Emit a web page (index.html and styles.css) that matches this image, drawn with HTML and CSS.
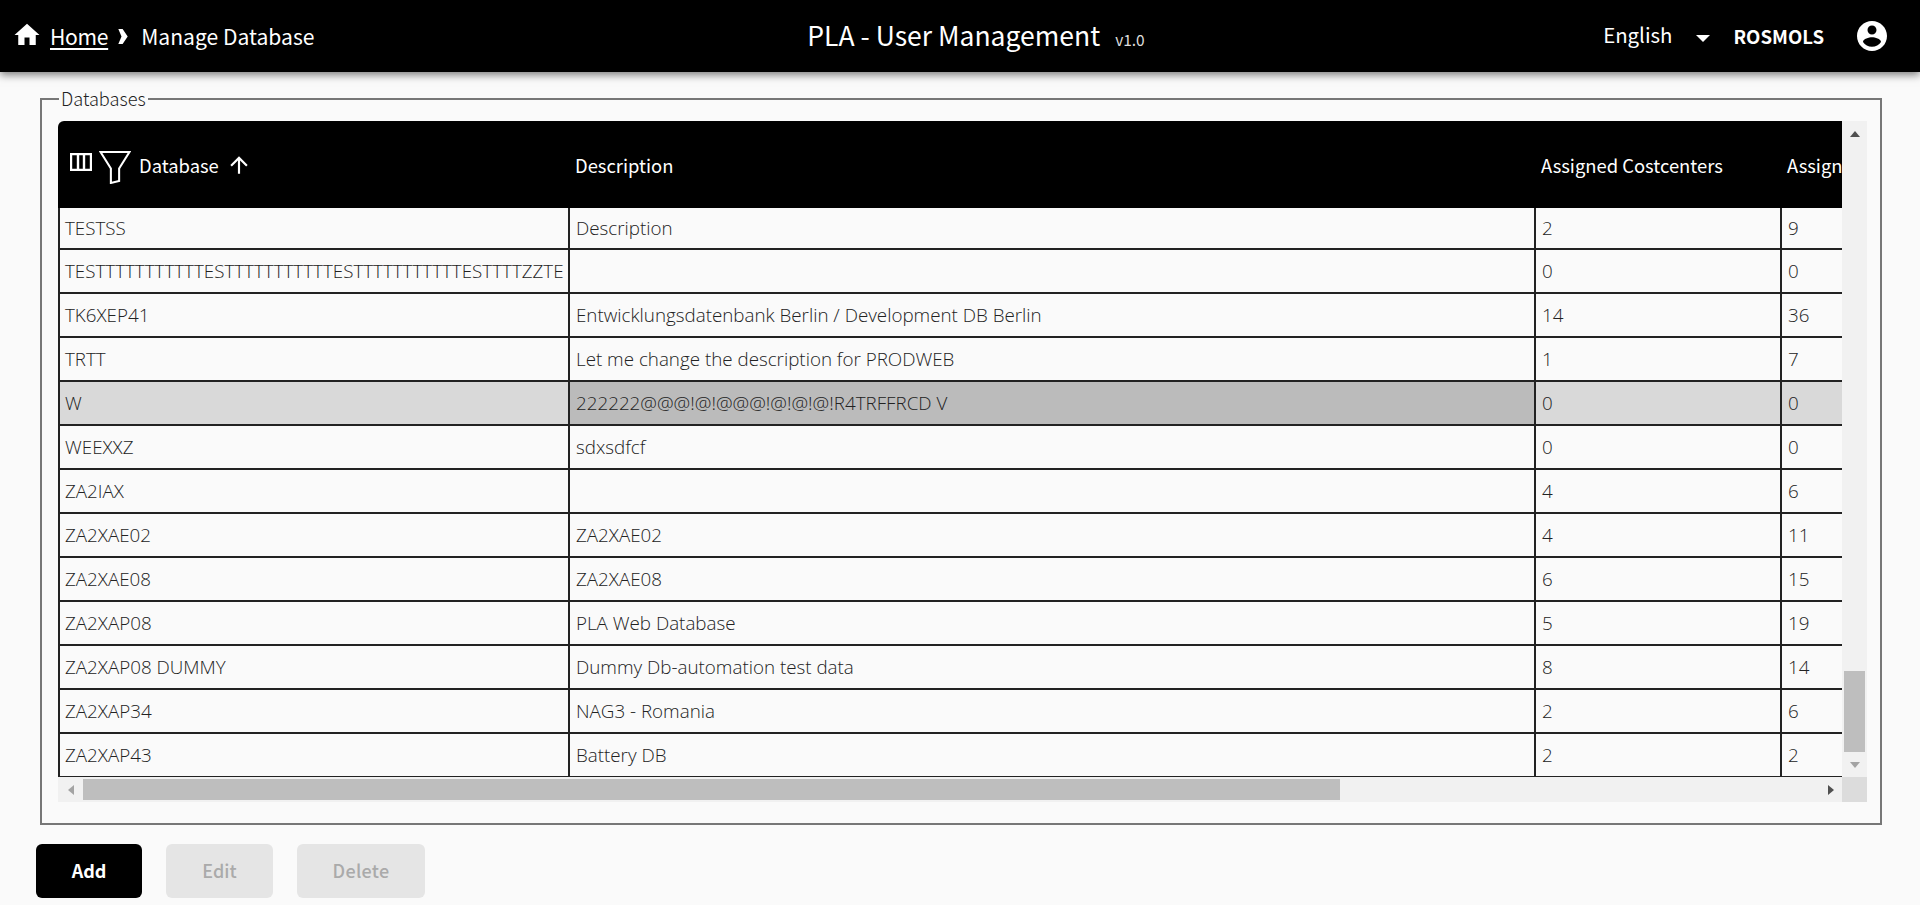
FILE: index.html
```html
<!DOCTYPE html>
<html lang="en">
<head>
<meta charset="utf-8">
<title>PLA - User Management</title>
<link rel="stylesheet" href="styles.css">
</head>
<body>
<header class="topbar">
  <nav class="crumbs">
    <svg class="home-icon" viewBox="0 0 24 24"><path d="M10 20v-6h4v6h5v-8h3L12 3 2 12h3v8z"/></svg>
    <a class="crumb-link" href="#">Home</a>
    <svg class="crumb-sep" viewBox="0 0 10 16"><path d="M0 0h4.6L10 8l-5.4 8H0l3.4-8z"/></svg>
    <span class="crumb-current">Manage Database</span>
  </nav>
  <div class="app-title"><span class="app-name">PLA - User Management</span><span class="app-version">v1.0</span></div>
  <div class="user-area">
    <span class="lang">English</span>
    <svg class="caret" viewBox="0 0 14 7"><path d="M0 0h14L7 7z"/></svg>
    <span class="user-name">ROSMOLS</span>
    <svg class="user-icon" viewBox="0 0 24 24"><path d="M12 2C6.48 2 2 6.48 2 12s4.48 10 10 10 10-4.48 10-10S17.52 2 12 2zm0 3c1.66 0 3 1.34 3 3s-1.34 3-3 3-3-1.34-3-3 1.34-3 3-3zm0 14.2c-2.5 0-4.71-1.28-6-3.22.03-1.99 4-3.08 6-3.08 1.99 0 5.97 1.09 6 3.08-1.29 1.94-3.5 3.22-6 3.22z"/></svg>
  </div>
</header>
<main class="page">
  <fieldset class="panel">
    <legend class="panel-title">Databases</legend>
    <div class="grid-shell">
      <div class="table-view">
        <table class="db-table">
          <colgroup><col class="c1"><col class="c2"><col class="c3"><col class="c4"></colgroup>
          <thead>
            <tr>
              <th>
                <div class="first-head">
                  <svg class="col-icon" viewBox="0 0 22 18"><path d="M1 1h20v16H1zM8 1v16M14 1v16"/></svg>
                  <svg class="filter-icon" viewBox="0 0 30 32"><path d="M1 1h28L19 17v12l-8 2V17z"/></svg>
                  <span class="db-label">Database</span>
                  <svg class="sort-icon" viewBox="0 0 24 24"><path d="M4 12l1.41 1.41L11 7.83V20h2V7.83l5.58 5.59L20 12l-8-8-8 8z"/></svg>
                </div>
              </th>
              <th>Description</th>
              <th>Assigned Costcenters</th>
              <th>Assigned Users</th>
            </tr>
          </thead>
          <tbody>
            <tr class="row-first"><td>TESTSS</td><td>Description</td><td>2</td><td>9</td></tr>
            <tr><td>TESTTTTTTTTTTTESTTTTTTTTTTTESTTTTTTTTTTTESTTTTZZTE</td><td></td><td>0</td><td>0</td></tr>
            <tr><td>TK6XEP41</td><td>Entwicklungsdatenbank Berlin / Development DB Berlin</td><td>14</td><td>36</td></tr>
            <tr><td>TRTT</td><td>Let me change the description for PRODWEB</td><td>1</td><td>7</td></tr>
            <tr class="row-selected"><td>W</td><td class="cell-focus">222222@@@!@!@@@!@!@!@!R4TRFFRCD V</td><td>0</td><td>0</td></tr>
            <tr><td>WEEXXZ</td><td>sdxsdfcf</td><td>0</td><td>0</td></tr>
            <tr><td>ZA2IAX</td><td></td><td>4</td><td>6</td></tr>
            <tr><td>ZA2XAE02</td><td>ZA2XAE02</td><td>4</td><td>11</td></tr>
            <tr><td>ZA2XAE08</td><td>ZA2XAE08</td><td>6</td><td>15</td></tr>
            <tr><td>ZA2XAP08</td><td>PLA Web Database</td><td>5</td><td>19</td></tr>
            <tr><td>ZA2XAP08 DUMMY</td><td>Dummy Db-automation test data</td><td>8</td><td>14</td></tr>
            <tr><td>ZA2XAP34</td><td>NAG3 - Romania</td><td>2</td><td>6</td></tr>
            <tr class="row-last"><td>ZA2XAP43</td><td>Battery DB</td><td>2</td><td>2</td></tr>
          </tbody>
        </table>
      </div>
      <div class="vbar">
        <span class="arrow arrow-up"></span>
        <span class="vthumb"></span>
        <span class="arrow arrow-down"></span>
      </div>
      <div class="hbar">
        <span class="arrow arrow-left"></span>
        <span class="hthumb"></span>
        <span class="arrow arrow-right"></span>
      </div>
      <div class="corner"></div>
    </div>
  </fieldset>
  <div class="actions">
    <button class="btn btn-add" type="button">Add</button>
    <button class="btn btn-edit" type="button" disabled>Edit</button>
    <button class="btn btn-delete" type="button" disabled>Delete</button>
  </div>
</main>
</body>
</html>
```

FILE: styles.css
```css
* { box-sizing: border-box; }
html, body { margin: 0; height: 905px; overflow: hidden; }
body { background: #fafafa; font-family: "Noto Sans CJK JP", Roboto, sans-serif; color: #333; }

.topbar {
  height: 72px;
  background: #000;
  color: #fff;
  display: grid;
  grid-template-columns: 1fr auto 1fr;
  align-items: center;
  box-shadow: 0 3px 8px rgba(0,0,0,.5);
  position: relative;
}
.crumbs { display: flex; align-items: center; padding-left: 12px; font-size: 21.1px; font-weight: 400; }
.home-icon { width: 30px; height: 30px; fill: #fff; margin-right: 8px; margin-top: -2px; }
.crumb-link { color: #fff; text-decoration: underline; text-decoration-thickness: 2px; text-underline-offset: 3px; margin-right: -1px; letter-spacing: -.3px; }
.crumb-sep { width: 10px; height: 15px; fill: #fff; margin: 0 13px 0 11px; }
.app-title { display: flex; align-items: baseline; margin: -4px 0 0 32px; }
.app-name { font-size: 26.5px; }
.app-version { font-size: 15.5px; margin-left: 15px; color: #ddd; }
.user-area { display: flex; align-items: center; justify-content: flex-end; padding-right: 30px; }
.lang { font-size: 20.4px; font-weight: 400; margin-top: -5px; }
.caret { width: 14px; height: 7px; fill: #fff; margin: 4px 23px 0 24px; }
.user-name { font-size: 18.6px; font-weight: 700; margin-top: -1px; }
.user-icon { width: 36px; height: 36px; fill: #fff; margin-left: 30px; }

.page { padding: 17px 38px 0 40px; }
.panel {
  margin: 0;
  min-width: 0;
  border: 2px solid #777;
  padding: 12px 13px 21px 16px;
  height: 736px;
}
.panel-title { font-size: 18.2px; line-height: 18px; font-weight: 300; padding: 0 2px 2px; margin-left: 1px; color: #222; }

.grid-shell {
  display: grid;
  grid-template-columns: 1784px 25px;
  grid-template-rows: 656px 25px;
}
.table-view { overflow: hidden; border-top-left-radius: 6px; }
.db-table { border-collapse: separate; border-spacing: 0; table-layout: fixed; width: 2023px; font-size: 18px; }
.c1 { width: 512px; }
.c2 { width: 966px; }
.c3 { width: 246px; }
.c4 { width: 299px; }
.db-table th {
  height: 87px;
  background: #000;
  color: #fff;
  text-align: left;
  font-weight: 400;
  padding: 0 5px;
  font-size: 18.4px;
  white-space: nowrap;
}
.db-table th:first-child { padding: 0 0 0 12px; }
.first-head { display: flex; align-items: center; }
.col-icon { width: 22px; height: 18px; fill: none; stroke: #fff; stroke-width: 2.4; margin-top: -5px; }
.filter-icon { width: 32px; height: 33px; fill: none; stroke: #fff; stroke-width: 2; margin: 6px 8px 0 7px; }
.sort-icon { width: 26px; height: 26px; fill: #fff; margin-left: 7px; }
.db-label { display: block; }
.db-table td {
  height: 44px;
  padding: 0 6px;
  font-family: "Open Sans", "Noto Sans", sans-serif;
  font-size: 18.8px;
  line-height: 22px;
  font-weight: 300;
  color: #222;
  white-space: nowrap;
  overflow: hidden;
  border-right: 2px solid #222;
  border-bottom: 2px solid #222;
}
.db-table td:first-child { border-left: 2px solid #222; padding-left: 5px; }
.db-table td:last-child { border-right: 0; }
.row-first td { height: 42px; }
.row-last td { height: 43px; border-bottom-width: 1px; }
.row-selected td { background: #d9d9d9; }
.row-selected td.cell-focus { background: #bbb; }

.vbar { background: #f1f1f1; display: flex; flex-direction: column; align-items: center; justify-content: space-between; padding: 10px 2px 9px; }
.vthumb { display: block; width: 21px; height: 81px; background: #bebebe; margin-top: auto; margin-bottom: 10px; }
.hbar { background: #f1f1f1; display: flex; align-items: center; padding: 0 8px 0 10px; }
.hthumb { display: block; width: 1257px; height: 21px; background: #bebebe; margin-left: 9px; margin-right: auto; }
.corner { background: #dcdcdc; }
.arrow { display: block; width: 0; height: 0; border-style: solid; border-color: transparent; }
.arrow-up { border-width: 0 5px 6px; border-bottom-color: #505050; }
.arrow-down { border-width: 6px 5px 0; border-top-color: #a3a3a3; }
.arrow-left { border-width: 5px 6px 5px 0; border-right-color: #a3a3a3; }
.arrow-right { border-width: 5px 0 5px 6px; border-left-color: #505050; }

.actions { display: flex; gap: 24px; margin: 19px 0 0 -4px; }
.btn { height: 54px; border: 0; border-radius: 6px; font-family: inherit; font-size: 18px; font-weight: 500; padding: 0 0 2px; }
.btn-add { width: 106px; background: #000; color: #fff; font-weight: 700; }
.btn-edit { width: 107px; }
.btn-delete { width: 128px; letter-spacing: .3px; }
.btn:disabled { background: #e5e5e5; color: #aaa; }
```
